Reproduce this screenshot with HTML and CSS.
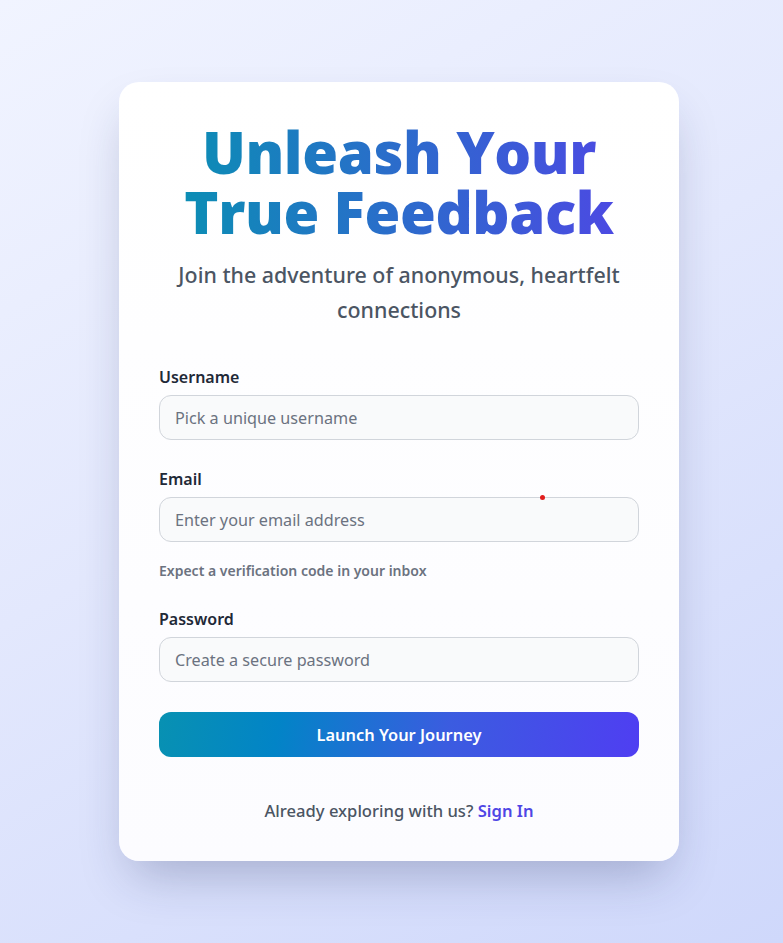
FILE: index.html
```html
<!DOCTYPE html>
<html lang="en">
<head>
<meta charset="utf-8">
<title>Sign Up</title>
<link rel="stylesheet" href="styles.css">
</head>
<body>
<main class="page">
  <section class="card">
    <header class="card-header">
      <h1 class="title">Unleash Your True Feedback</h1>
      <p class="subtitle">Join the adventure of anonymous, heartfelt connections</p>
    </header>
    <form class="form">
      <div class="field">
        <label class="label" for="username">Username</label>
        <input class="input" id="username" type="text" placeholder="Pick a unique username">
      </div>
      <div class="field field-email">
        <label class="label" for="email">Email</label>
        <div class="input-wrap">
          <input class="input" id="email" type="email" placeholder="Enter your email address">
          <span class="dot"></span>
        </div>
        <p class="hint">Expect a verification code in your inbox</p>
      </div>
      <div class="field field-password">
        <label class="label" for="password">Password</label>
        <input class="input" id="password" type="password" placeholder="Create a secure password">
      </div>
      <button class="submit" type="button">Launch Your Journey</button>
    </form>
    <p class="footer">Already exploring with us? <a class="link" href="#">Sign In</a></p>
  </section>
</main>
</body>
</html>
```

FILE: styles.css
```css
* { box-sizing: border-box; }
html, body { margin: 0; padding: 0; }
body {
  font-family: "Noto Sans", "Open Sans", "Liberation Sans", sans-serif;
  background: linear-gradient(150deg, #f1f4ff 0%, #e3e8fd 45%, #cfd8fb 100%);
  min-height: 943px;
}
.page {
  min-height: 943px;
  display: flex;
  align-items: center;
  justify-content: center;
  padding-left: 15px;
}
.card {
  width: 560px;
  height: 779px;
  background: linear-gradient(180deg, #ffffff 0%, #fcfcff 100%);
  border-radius: 20px;
  padding: 40px 40px 38px;
  box-shadow: 0 25px 50px -12px rgba(30, 41, 90, 0.28);
}
.card-header { text-align: center; }
.title {
  margin: 0;
  font-family: "Open Sans", "Noto Sans", sans-serif;
  font-weight: 800;
  font-size: 58px;
  line-height: 60px;
  letter-spacing: -0.4px;
  background: linear-gradient(90deg, #0891b2 0%, #4f46e5 100%);
  -webkit-background-clip: text;
  background-clip: text;
  color: transparent;
}
.subtitle {
  margin: 15px 0 0;
  font-size: 21.4px;
  line-height: 35px;
  color: #4b5563;
  font-weight: 500;
}
.form {
  margin-top: 38px;
  display: flex;
  flex-direction: column;
}
.field { display: flex; flex-direction: column; }
.field-email { margin-top: 27px; }
.field-password { margin-top: 26px; }
.label {
  font-size: 16px;
  line-height: 24px;
  font-weight: 600;
  color: #1f2937;
  margin-bottom: 6px;
}
.input-wrap { position: relative; }
.input {
  width: 100%;
  height: 45px;
  border: 1px solid #d1d5db;
  border-radius: 12px;
  background: #f9fafb;
  padding: 0 15px;
  font-family: inherit;
  font-size: 16.2px;
  color: #111827;
  outline: none;
}
.input::placeholder { color: #6b7280; }
.dot {
  position: absolute;
  left: 381px;
  top: -2px;
  width: 5px;
  height: 5px;
  border-radius: 50%;
  background: #e11d1d;
}
.hint {
  margin: 19px 0 0;
  font-size: 14px;
  line-height: 20px;
  font-weight: 600;
  color: #6b7280;
}
.submit {
  margin-top: 30px;
  height: 45px;
  border: none;
  border-radius: 12px;
  background: linear-gradient(100deg, #0891b2 0%, #0284c7 25%, #3b5ce0 60%, #4f3ef2 100%);
  color: #ffffff;
  font-family: inherit;
  font-size: 16.4px;
  font-weight: 600;
  cursor: pointer;
}
.footer {
  margin: 42px 0 0;
  text-align: center;
  font-size: 16.6px;
  line-height: 24px;
  font-weight: 500;
  color: #4b5563;
}
.link {
  color: #4f46e5;
  font-weight: 600;
  text-decoration: none;
}
```
